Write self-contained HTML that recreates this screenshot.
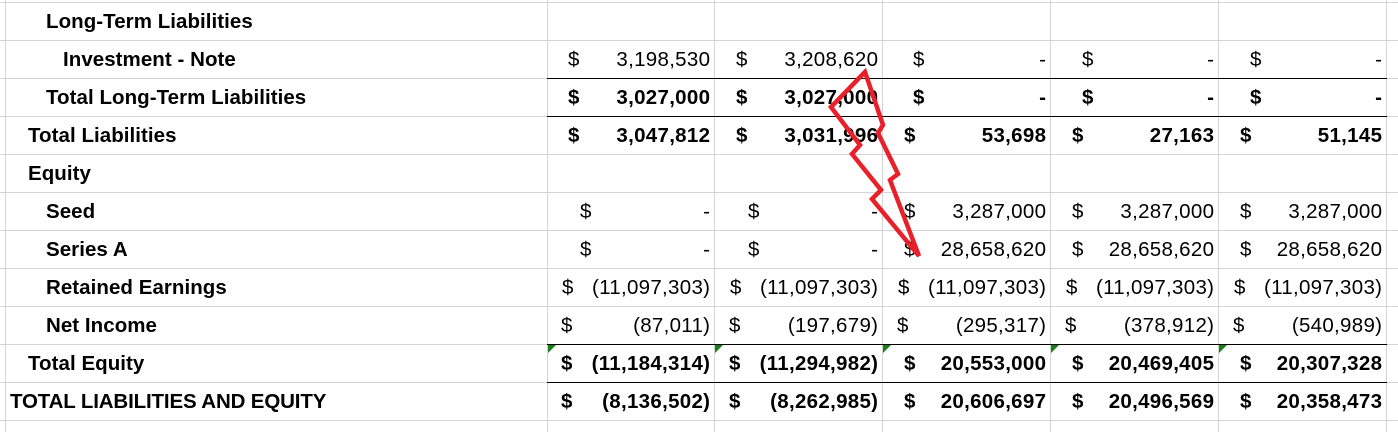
<!DOCTYPE html>
<html><head><style>
body{margin:0;width:1398px;height:432px;overflow:hidden;background:#fff;font-family:"Liberation Sans",Arial,sans-serif;font-size:20.5px;color:#000;position:relative}
.h{position:absolute;left:0;width:1398px;height:1px;background:#d4d4d4}
.v{position:absolute;top:0;height:432px;width:1px;background:#d4d4d4}
.b{position:absolute;left:547px;width:840px;height:1px;background:#000}
.t{position:absolute;line-height:20px;white-space:nowrap;letter-spacing:0.3px}
.l{letter-spacing:0.05px}
.bd{font-weight:bold}
.r{position:absolute;line-height:20px;white-space:nowrap;text-align:right;width:160.3px;letter-spacing:0.3px}
.g{position:absolute;top:345px;width:0;height:0;border-top:8px solid #1a7f1a;border-right:8px solid transparent}
</style></head><body>
<div class="h" style="top:2px"></div><div class="h" style="top:40px"></div><div class="h" style="top:78px"></div><div class="h" style="top:116px"></div><div class="h" style="top:154px"></div><div class="h" style="top:192px"></div><div class="h" style="top:230px"></div><div class="h" style="top:268px"></div><div class="h" style="top:306px"></div><div class="h" style="top:344px"></div><div class="h" style="top:382px"></div><div class="h" style="top:420px"></div>
<div class="v" style="left:5px"></div><div class="v" style="left:547px"></div><div class="v" style="left:714px"></div><div class="v" style="left:882px"></div><div class="v" style="left:1050px"></div><div class="v" style="left:1218px"></div><div class="v" style="left:1386px"></div>
<div class="b" style="top:78px"></div><div class="b" style="top:116px"></div><div class="b" style="top:344px"></div><div class="b" style="top:382px"></div>
<div class="g" style="left:548px"></div><div class="g" style="left:715px"></div><div class="g" style="left:883px"></div><div class="g" style="left:1051px"></div><div class="g" style="left:1219px"></div>

<div class="t l bd" style="left:46px;top:12px">Long-Term Liabilities</div>
<div class="t l bd" style="left:63px;top:50px">Investment - Note</div>
<div class="t l bd" style="left:46px;top:88px">Total Long-Term Liabilities</div>
<div class="t l bd" style="left:28px;top:126px">Total Liabilities</div>
<div class="t l bd" style="left:28px;top:164px">Equity</div>
<div class="t l bd" style="left:46px;top:202px">Seed</div>
<div class="t l bd" style="left:46px;top:240px">Series A</div>
<div class="t l bd" style="left:46px;top:278px">Retained Earnings</div>
<div class="t l bd" style="left:46px;top:316px">Net Income</div>
<div class="t l bd" style="left:28px;top:354px">Total Equity</div>
<div class="t l bd" style="left:10px;top:392px;letter-spacing:-0.15px">TOTAL LIABILITIES AND EQUITY</div>

<div class="t" style="left:568px;top:50px">$</div><div class="r" style="left:550px;top:50px">3,198,530</div>
<div class="t" style="left:736px;top:50px">$</div><div class="r" style="left:718px;top:50px">3,208,620</div>
<div class="t" style="left:913px;top:50px">$</div><div class="r" style="left:886px;top:50px">-</div>
<div class="t" style="left:1082px;top:50px">$</div><div class="r" style="left:1054px;top:50px">-</div>
<div class="t" style="left:1250px;top:50px">$</div><div class="r" style="left:1222px;top:50px">-</div>

<div class="t bd" style="left:568px;top:88px">$</div><div class="r bd" style="left:550px;top:88px">3,027,000</div>
<div class="t bd" style="left:736px;top:88px">$</div><div class="r bd" style="left:718px;top:88px">3,027,000</div>
<div class="t bd" style="left:913px;top:88px">$</div><div class="r bd" style="left:886px;top:88px">-</div>
<div class="t bd" style="left:1082px;top:88px">$</div><div class="r bd" style="left:1054px;top:88px">-</div>
<div class="t bd" style="left:1250px;top:88px">$</div><div class="r bd" style="left:1222px;top:88px">-</div>

<div class="t bd" style="left:568px;top:126px">$</div><div class="r bd" style="left:550px;top:126px">3,047,812</div>
<div class="t bd" style="left:736px;top:126px">$</div><div class="r bd" style="left:718px;top:126px">3,031,996</div>
<div class="t bd" style="left:904px;top:126px">$</div><div class="r bd" style="left:886px;top:126px">53,698</div>
<div class="t bd" style="left:1072px;top:126px">$</div><div class="r bd" style="left:1054px;top:126px">27,163</div>
<div class="t bd" style="left:1240px;top:126px">$</div><div class="r bd" style="left:1222px;top:126px">51,145</div>

<div class="t" style="left:580px;top:202px">$</div><div class="r" style="left:550px;top:202px">-</div>
<div class="t" style="left:748px;top:202px">$</div><div class="r" style="left:718px;top:202px">-</div>
<div class="t" style="left:904px;top:202px">$</div><div class="r" style="left:886px;top:202px">3,287,000</div>
<div class="t" style="left:1072px;top:202px">$</div><div class="r" style="left:1054px;top:202px">3,287,000</div>
<div class="t" style="left:1240px;top:202px">$</div><div class="r" style="left:1222px;top:202px">3,287,000</div>

<div class="t" style="left:580px;top:240px">$</div><div class="r" style="left:550px;top:240px">-</div>
<div class="t" style="left:748px;top:240px">$</div><div class="r" style="left:718px;top:240px">-</div>
<div class="t" style="left:904px;top:240px">$</div><div class="r" style="left:886px;top:240px">28,658,620</div>
<div class="t" style="left:1072px;top:240px">$</div><div class="r" style="left:1054px;top:240px">28,658,620</div>
<div class="t" style="left:1240px;top:240px">$</div><div class="r" style="left:1222px;top:240px">28,658,620</div>

<div class="t" style="left:562px;top:278px">$</div><div class="r" style="left:550px;top:278px">(11,097,303)</div>
<div class="t" style="left:730px;top:278px">$</div><div class="r" style="left:718px;top:278px">(11,097,303)</div>
<div class="t" style="left:898px;top:278px">$</div><div class="r" style="left:886px;top:278px">(11,097,303)</div>
<div class="t" style="left:1066px;top:278px">$</div><div class="r" style="left:1054px;top:278px">(11,097,303)</div>
<div class="t" style="left:1234px;top:278px">$</div><div class="r" style="left:1222px;top:278px">(11,097,303)</div>

<div class="t" style="left:561px;top:316px">$</div><div class="r" style="left:550px;top:316px">(87,011)</div>
<div class="t" style="left:729px;top:316px">$</div><div class="r" style="left:718px;top:316px">(197,679)</div>
<div class="t" style="left:897px;top:316px">$</div><div class="r" style="left:886px;top:316px">(295,317)</div>
<div class="t" style="left:1065px;top:316px">$</div><div class="r" style="left:1054px;top:316px">(378,912)</div>
<div class="t" style="left:1233px;top:316px">$</div><div class="r" style="left:1222px;top:316px">(540,989)</div>

<div class="t bd" style="left:561px;top:354px">$</div><div class="r bd" style="left:550px;top:354px">(11,184,314)</div>
<div class="t bd" style="left:729px;top:354px">$</div><div class="r bd" style="left:718px;top:354px">(11,294,982)</div>
<div class="t bd" style="left:904px;top:354px">$</div><div class="r bd" style="left:886px;top:354px">20,553,000</div>
<div class="t bd" style="left:1072px;top:354px">$</div><div class="r bd" style="left:1054px;top:354px">20,469,405</div>
<div class="t bd" style="left:1240px;top:354px">$</div><div class="r bd" style="left:1222px;top:354px">20,307,328</div>

<div class="t bd" style="left:561px;top:392px">$</div><div class="r bd" style="left:550px;top:392px">(8,136,502)</div>
<div class="t bd" style="left:729px;top:392px">$</div><div class="r bd" style="left:718px;top:392px">(8,262,985)</div>
<div class="t bd" style="left:904px;top:392px">$</div><div class="r bd" style="left:886px;top:392px">20,606,697</div>
<div class="t bd" style="left:1072px;top:392px">$</div><div class="r bd" style="left:1054px;top:392px">20,496,569</div>
<div class="t bd" style="left:1240px;top:392px">$</div><div class="r bd" style="left:1222px;top:392px">20,358,473</div>

<svg style="position:absolute;left:0;top:0" width="1398" height="432">
<polygon points="865,72 831,107 860,145 852,154 881,190 872,199 919,256 890,180 898,174 878,133 883,125" fill="none" stroke="#e8202a" stroke-width="4.5" stroke-linejoin="miter"/>
</svg>
</body></html>
